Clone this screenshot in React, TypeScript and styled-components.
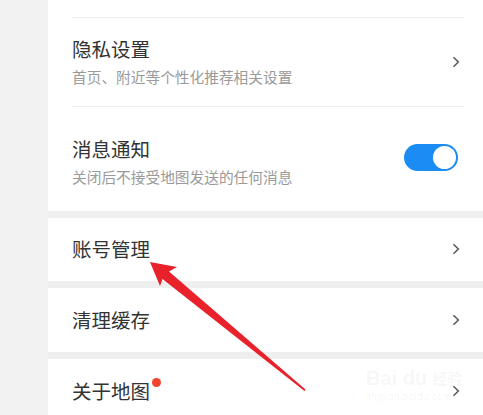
import { FunctionComponent } from 'react';
import styled, { createGlobalStyle } from 'styled-components';

const GlobalStyle = createGlobalStyle`
  html, body {
    margin: 0;
    padding: 0;
    background: #ffffff;
    overflow: hidden;
  }

  body {
    font-family: 'Noto Sans CJK SC', 'Noto Sans', sans-serif;
  }
`;

const StyledPage = styled.div`
  position: relative;
  width: 483px;
  height: 415px;
  overflow: hidden;
  display: flex;
  flex-direction: row;
`;

const StyledSidebar = styled.div`
  width: 48px;
  flex-shrink: 0;
  background-color: #f2f2f2;
`;

const StyledMain = styled.main`
  flex: 1;
  display: flex;
  flex-direction: column;
  gap: 7px;
  background-color: #efefef;
`;

const StyledGroup = styled.section`
  background-color: #ffffff;
  padding: 0 19px 0 24px;
  display: flex;
  flex-direction: column;
`;

const StyledTopStub = styled.div`
  height: 17px;
  border-bottom: 1px solid #ededed;
`;

const StyledRow = styled.div<{ $pt: number; $pb: number; $divider?: boolean }>`
  display: flex;
  flex-direction: row;
  align-items: center;
  justify-content: space-between;
  padding: ${({ $pt }) => $pt}px 0 ${({ $pb }) => $pb}px 0;
  border-bottom: ${({ $divider }) => ($divider ? '1px solid #ededed' : 'none')};
`;

const StyledText = styled.div`
  display: flex;
  flex-direction: column;
  gap: 4px;
`;

const StyledTitleWrap = styled.div`
  position: relative;
  align-self: flex-start;
`;

const StyledTitle = styled.div`
  font-size: 19.5px;
  line-height: 26px;
  color: #333333;
  white-space: nowrap;
`;

const StyledSubtitle = styled.div`
  font-size: 14.7px;
  line-height: 22px;
  color: #9a9a9a;
  white-space: nowrap;
`;

const StyledDot = styled.span`
  position: absolute;
  top: 0;
  right: -11px;
  width: 9px;
  height: 9px;
  border-radius: 50%;
  background-color: #f2452e;
`;

const StyledChevron = styled.svg`
  width: 8px;
  height: 12px;
  margin-right: 4px;
  flex-shrink: 0;
`;

const StyledToggle = styled.div<{ $on: boolean }>`
  width: 54px;
  height: 27px;
  margin: 0 6px 10px 0;
  border-radius: 14px;
  background-color: ${({ $on }) => ($on ? '#1a8cf3' : '#d9d9d9')};
  display: flex;
  align-items: center;
  justify-content: ${({ $on }) => ($on ? 'flex-end' : 'flex-start')};
  padding: 0 2px;
  box-sizing: border-box;
`;

const StyledKnob = styled.div`
  width: 23px;
  height: 23px;
  border-radius: 50%;
  background-color: #ffffff;
`;

const StyledArrow = styled.svg`
  position: absolute;
  left: 0;
  top: 0;
  width: 483px;
  height: 415px;
  pointer-events: none;
`;

// faint baidu jingyan watermark in the bottom right corner
const StyledWatermark = styled.div`
  position: absolute;
  left: 366px;
  top: 366px;
  display: flex;
  flex-direction: column;
  gap: 1px;
  color: rgba(0, 0, 0, 0.05);
  font-family: 'Liberation Sans', Arial, sans-serif;
  white-space: nowrap;
  pointer-events: none;
`;

const StyledMarkTop = styled.div`
  display: flex;
  align-items: center;
  gap: 5px;
  font-size: 20px;
  font-weight: bold;
  line-height: 24px;
`;

const StyledMarkCn = styled.span`
  font-family: 'Noto Sans CJK SC', sans-serif;
  font-size: 15px;
  font-weight: bold;
`;

const StyledMarkUrl = styled.div`
  font-size: 10px;
  line-height: 12px;
  letter-spacing: 0.3px;
`;

const Chevron = () => (
  <StyledChevron viewBox='0 0 8 12'>
    <polyline points='1.5,1.2 6.3,6 1.5,10.8' fill='none' stroke='#5c5c5c' strokeWidth='1.6' />
  </StyledChevron>
);

const RedArrow = () => (
  <StyledArrow viewBox='0 0 483 415'>
    <polygon
      points='150,262 177,267 169,271.5 305.5,389.5 304.5,391 162.5,279 160,286'
      fill='#e8212a'
    />
  </StyledArrow>
);

const App: FunctionComponent = () => {
  return (
    <>
      <GlobalStyle />
      <StyledPage>
        <StyledSidebar />
        <StyledMain>
          <StyledGroup>
            <StyledTopStub />
            <StyledRow $pt={18} $pb={18} $divider>
              <StyledText>
                <StyledTitle>隐私设置</StyledTitle>
                <StyledSubtitle>首页、附近等个性化推荐相关设置</StyledSubtitle>
              </StyledText>
              <Chevron />
            </StyledRow>
            <StyledRow $pt={29} $pb={23}>
              <StyledText>
                <StyledTitle>消息通知</StyledTitle>
                <StyledSubtitle>关闭后不接受地图发送的任何消息</StyledSubtitle>
              </StyledText>
              <StyledToggle $on>
                <StyledKnob />
              </StyledToggle>
            </StyledRow>
          </StyledGroup>

          <StyledGroup>
            <StyledRow $pt={18} $pb={19}>
              <StyledTitle>账号管理</StyledTitle>
              <Chevron />
            </StyledRow>
          </StyledGroup>

          <StyledGroup>
            <StyledRow $pt={19} $pb={19}>
              <StyledTitle>清理缓存</StyledTitle>
              <Chevron />
            </StyledRow>
          </StyledGroup>

          <StyledGroup>
            <StyledRow $pt={19} $pb={19}>
              <StyledTitleWrap>
                <StyledTitle>关于地图</StyledTitle>
                <StyledDot />
              </StyledTitleWrap>
              <Chevron />
            </StyledRow>
          </StyledGroup>
        </StyledMain>

        <StyledWatermark>
          <StyledMarkTop>
            <span>Bai du</span>
            <StyledMarkCn>经验</StyledMarkCn>
          </StyledMarkTop>
          <StyledMarkUrl>jingyan.baidu.com</StyledMarkUrl>
        </StyledWatermark>

        <RedArrow />
      </StyledPage>
    </>
  );
};

export default App;
